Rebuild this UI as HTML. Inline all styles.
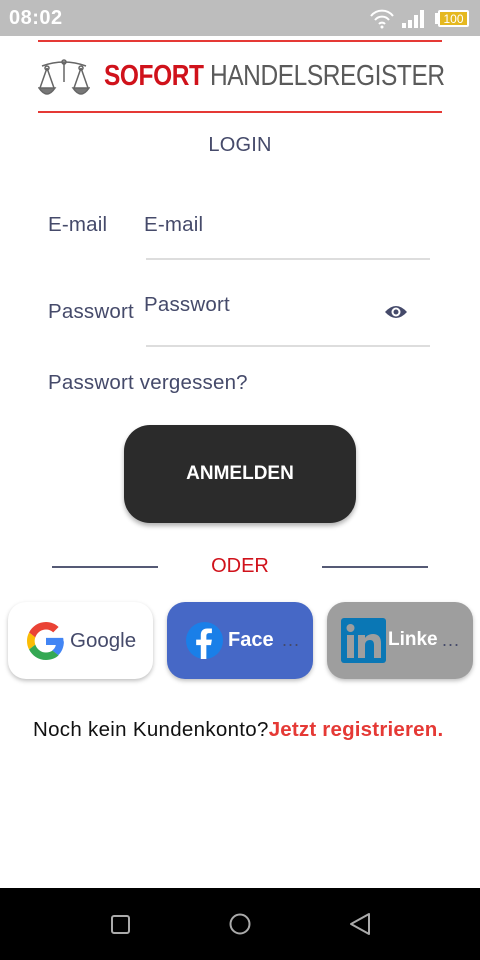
<!DOCTYPE html>
<html><head><meta charset="utf-8"><style>
*{margin:0;padding:0;box-sizing:border-box}
body{width:480px;height:960px;position:relative;background:#fff;font-family:"Liberation Sans",sans-serif;overflow:hidden;color:#454a6a}
.a{position:absolute}
.t{font-size:20.5px;color:#454a6a;letter-spacing:0.2px;white-space:nowrap}
</style></head><body>
<div class="a" style="left:0;top:0;width:480px;height:36px;background:#bdbdbd"></div>
<div class="a" style="left:9px;top:7px;font-size:20px;color:#fff;font-weight:bold;letter-spacing:0.5px">08:02</div>
<svg class="a" style="left:370px;top:8px" width="100" height="22" viewBox="0 0 100 22">
<path d="M1 8 A14 14 0 0 1 23 8" stroke="#fff" stroke-width="2" fill="none"/>
<path d="M5 12 A9 9 0 0 1 19 12" stroke="#fff" stroke-width="2" fill="none"/>
<path d="M9 16 A4 4 0 0 1 15 16" stroke="#fff" stroke-width="2" fill="none"/>
<circle cx="12" cy="19" r="1.5" fill="#fff"/>
<rect x="32" y="15" width="4" height="5" fill="#fff"/><rect x="38" y="12" width="4" height="8" fill="#fff"/><rect x="44" y="7" width="4" height="13" fill="#fff"/><rect x="50" y="2" width="4" height="18" fill="#fff"/>
<rect x="65" y="5" width="3" height="11" fill="#fff"/>
<rect x="68" y="2" width="31" height="17" rx="2" fill="#fff"/>
<rect x="70" y="4" width="27" height="13" fill="#e5b81f"/>
<text x="83.5" y="15" font-size="12" fill="#fff" text-anchor="middle" font-family="Liberation Sans">100</text>
</svg>
<div class="a" style="left:38px;top:40px;width:404px;height:2px;background:#e53935"></div>
<div class="a" style="left:38px;top:111px;width:404px;height:2px;background:#e53935"></div>
<svg class="a" style="left:38px;top:58px" width="52" height="42" viewBox="0 0 52 42" stroke="#666" fill="none" stroke-width="1.5">
<line x1="26" y1="4" x2="26" y2="24"/><path d="M4 8 Q26 0 48 8"/><circle cx="26" cy="4" r="2"/>
<circle cx="9" cy="10" r="2"/><circle cx="43" cy="10" r="2"/>
<path d="M9 10 L2 30 M9 10 L16 30 M43 10 L36 30 M43 10 L50 30"/>
<path d="M1 30 Q9 42 17 30 Z M35 30 Q43 42 51 30 Z" fill="#777"/>
</svg>
<div class="a" style="left:104px;top:60px;font-size:29px;letter-spacing:-0.5px;white-space:nowrap;transform-origin:0 0;transform:scaleX(0.845)"><span style="color:#d0121b;font-weight:bold">SOFORT</span> <span style="color:#5a5a5a">HANDELSREGISTER</span></div>
<div class="a t" style="left:0;width:480px;text-align:center;top:134px;font-size:20px">LOGIN</div>
<div class="a t" style="left:48px;top:213px">E-mail</div>
<div class="a t" style="left:144px;top:213px">E-mail</div>
<div class="a" style="left:146px;top:258px;width:284px;height:2px;background:#ddd"></div>
<div class="a t" style="left:48px;top:300px">Passwort</div>
<div class="a t" style="left:144px;top:293px">Passwort</div>
<svg class="a" style="left:384px;top:302px" width="24" height="20" viewBox="0 0 24 20"><path d="M1 10 Q12 -2 23 10 Q12 22 1 10Z" fill="#454a6a"/><circle cx="12" cy="10" r="4.5" fill="#fff"/><circle cx="12" cy="10" r="2.5" fill="#454a6a"/></svg>
<div class="a" style="left:146px;top:345px;width:284px;height:2px;background:#ddd"></div>
<div class="a t" style="left:48px;top:371px">Passwort vergessen?</div>
<div class="a" style="left:124px;top:425px;width:232px;height:98px;background:#2b2b2b;border-radius:26px;box-shadow:0 3px 5px rgba(0,0,0,.3);color:#fff;font-size:19px;font-weight:bold;text-align:center;line-height:98px">ANMELDEN</div>
<div class="a" style="left:52px;top:566px;width:106px;height:2px;background:#555a75"></div>
<div class="a" style="left:322px;top:566px;width:106px;height:2px;background:#555a75"></div>
<div class="a" style="left:0;width:480px;text-align:center;top:555px;font-size:20px;color:#d0121b">ODER</div>
<div class="a" style="left:8px;top:602px;width:145px;height:77px;background:#fff;border-radius:18px;box-shadow:0 2px 4px rgba(0,0,0,.25)"></div>
<svg class="a" style="left:27px;top:622px" width="38" height="38" viewBox="0 0 48 48"><path fill="#EA4335" d="M24 9.5c3.5 0 6.6 1.2 9.1 3.6l6.8-6.8C35.8 2.4 30.3 0 24 0 14.6 0 6.6 5.4 2.6 13.3l7.9 6.2C12.4 13.7 17.7 9.5 24 9.5z"/><path fill="#4285F4" d="M46.1 24.5c0-1.6-.1-3.1-.4-4.5H24v9h12.4c-.5 2.9-2.2 5.3-4.6 7l7.7 6c4.5-4.2 7.1-10.3 7.1-17.5z"/><path fill="#FBBC05" d="M10.5 28.6c-.5-1.4-.8-3-.8-4.6s.3-3.2.8-4.6l-7.9-6.2C.9 16.5 0 20.1 0 24s.9 7.5 2.6 10.8l7.9-6.2z"/><path fill="#34A853" d="M24 48c6.5 0 11.9-2.1 15.9-5.8l-7.7-6c-2.2 1.5-5 2.3-8.2 2.3-6.3 0-11.6-4.2-13.5-10l-7.9 6.2C6.6 42.6 14.6 48 24 48z"/></svg>
<div class="a" style="left:70px;top:629px;font-size:20.5px;color:#454a6a">Google</div>
<div class="a" style="left:167px;top:602px;width:146px;height:77px;background:#4668c6;border-radius:18px;box-shadow:0 2px 4px rgba(0,0,0,.25)"></div>
<svg class="a" style="left:186px;top:622px" width="37" height="37" viewBox="0 0 40 40"><circle cx="20" cy="20" r="20" fill="#1a7fe8"/><path d="M22 40V25h5l1-6h-6v-4c0-2 1-3 3-3h3V7h-5c-5 0-7 3-7 7v5h-5v6h5v15z" fill="#fff"/></svg>
<div class="a" style="left:228px;top:629px;font-size:20px;color:#fff;font-weight:bold">Face</div>
<div class="a" style="left:282px;top:630px;font-size:18px;color:#454a6a;letter-spacing:1px">...</div>
<div class="a" style="left:327px;top:602px;width:146px;height:77px;background:#9e9e9e;border-radius:18px;box-shadow:0 2px 4px rgba(0,0,0,.25)"></div>
<svg class="a" style="left:341px;top:618px" width="45" height="45" viewBox="0 0 45 45"><rect width="45" height="45" rx="3" fill="#0a77b5"/><rect x="6" y="17" width="7" height="23" fill="#9e9e9e"/><circle cx="9.5" cy="10" r="4" fill="#9e9e9e"/><path d="M17 17h7v3c2-3 5-4 8-4 5 0 8 3 8 9v15h-7V27c0-3-1-5-4-5s-5 2-5 5v13h-7z" fill="#9e9e9e"/></svg>
<div class="a" style="left:388px;top:629px;font-size:19px;color:#fff;font-weight:bold">Linke</div>
<div class="a" style="left:442px;top:630px;font-size:18px;color:#454a6a;letter-spacing:1px">...</div>
<div class="a" style="left:33px;top:718px;font-size:20.5px;color:#111;white-space:nowrap;letter-spacing:0.3px">Noch kein Kundenkonto?<span style="color:#e53935;font-weight:bold;letter-spacing:0.2px">Jetzt registrieren.</span></div>
<div class="a" style="left:0;top:888px;width:480px;height:72px;background:#000"></div>
<svg class="a" style="left:0;top:888px" width="480" height="72"><rect x="112" y="28" width="17" height="17" rx="2" stroke="#aaa" stroke-width="2" fill="none"/><circle cx="240" cy="36" r="9.5" stroke="#aaa" stroke-width="2" fill="none"/><path d="M369 26 L369 46 L351 36 Z" stroke="#aaa" stroke-width="2" fill="none" stroke-linejoin="round"/></svg>
</body></html>
